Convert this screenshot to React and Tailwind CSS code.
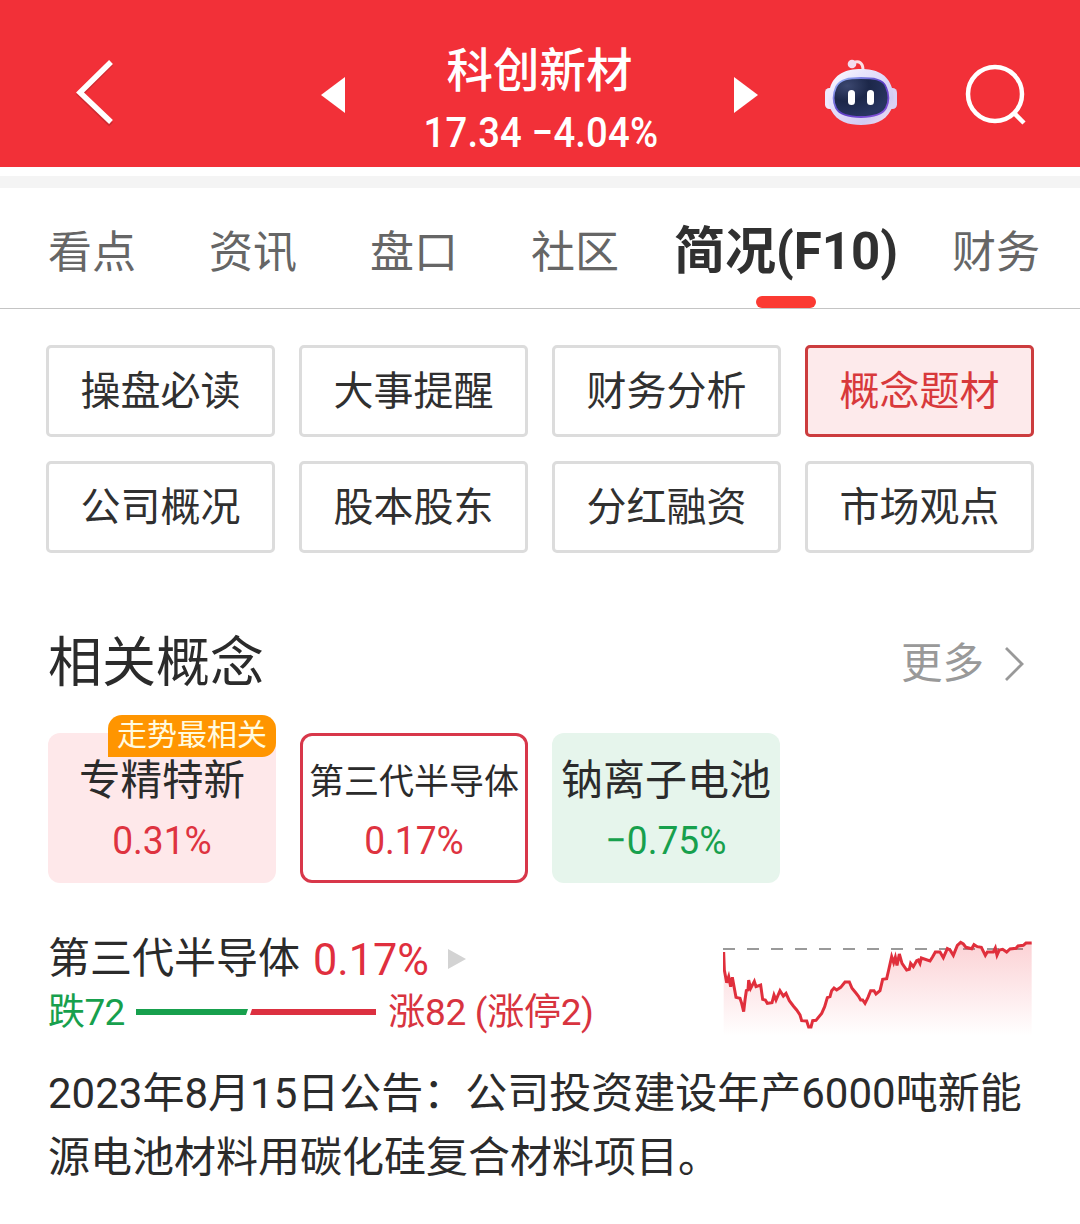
import React from "react";

const tabs = [
  { name: "看点", className: "ml-[48px]" },
  { name: "资讯", className: "ml-[73px]" },
  { name: "盘口", className: "ml-[73px]" },
  { name: "社区", className: "ml-[73px]" },
  { name: "简况(F10)", active: true, className: "ml-[55px]" },
  { name: "财务", className: "ml-[56px]" },
];

const menus = [
  "操盘必读",
  "大事提醒",
  "财务分析",
  "概念题材",
  "公司概况",
  "股本股东",
  "分红融资",
  "市场观点",
];

const trend =
  "71,96 73,150 80,188 86,170 92,200 97,172 103,205 108,232 120,235 125,250 131,275 135,240 139,212 144,210 146,180 152,205 163,184 168,200 182,195 188,238 196,240 202,250 216,248 222,225 228,240 240,212 250,228 258,220 268,242 280,258 290,270 300,285 305,302 320,303 326,321 333,321 338,302 348,301 365,280 374,260 382,233 390,230 395,212 402,204 410,210 422,202 435,186 448,186 456,205 466,217 475,228 482,240 488,240 495,250 504,232 512,212 522,212 528,222 540,212 548,178 560,176 566,150 575,110 581,128 586,112 591,136 598,102 606,130 620,150 628,148 632,130 640,140 650,122 655,120 660,130 664,114 690,123 698,110 706,96 720,96 730,113 742,86 750,90 760,106 772,76 782,67 790,72 798,82 815,86 822,74 832,80 844,82 856,106 862,96 880,96 886,84 891,106 898,90 908,88 920,96 930,87 948,85 954,78 970,76 978,69 995,69";

function Robot() {
  return (
    <svg className="ml-[67px] mt-[7px]" width="72" height="68" viewBox="0 0 72 68" fill="none">
      <defs>
        <linearGradient id="shell" x1="0" y1="0" x2="1" y2="1">
          <stop offset="0" stopColor="#ffffff" />
          <stop offset="0.3" stopColor="#e9e4fc" />
          <stop offset="0.75" stopColor="#d2cbf3" />
          <stop offset="1" stopColor="#fbe3ee" />
        </linearGradient>
        <linearGradient id="rim" x1="0" y1="0" x2="1" y2="1">
          <stop offset="0" stopColor="#9fc4ff" />
          <stop offset="0.5" stopColor="#5b3dc4" />
          <stop offset="1" stopColor="#8a55dc" />
        </linearGradient>
        <radialGradient id="face" cx="0.25" cy="0.2" r="0.8">
          <stop offset="0" stopColor="#3c4870" />
          <stop offset="0.5" stopColor="#1c2749" />
          <stop offset="1" stopColor="#283560" />
        </radialGradient>
      </defs>
      <path d="M28 6C34 3 38 6 38 13" stroke="#fbdfe6" strokeWidth="3" />
      <circle cx="27" cy="7" r="4.3" fill="#f3dcf0" />
      <rect x="0" y="31" width="11" height="21" rx="4.5" fill="#efe9fd" />
      <rect x="61" y="31" width="11" height="21" rx="4.5" fill="#dad0f5" />
      <path
        d="M36 12C51 12 63 17 67 31C69 38 70 46 66 53C60 65 48 68 36 68C24 68 12 65 6 53C2 46 3 38 5 31C9 17 21 12 36 12Z"
        fill="url(#shell)"
      />
      <path
        d="M36 21C48 21 58 22 61 30C64 37 64 45 61 51C57 58 47 60 36 60C25 60 15 58 11 51C8 45 8 37 11 30C15 22 24 21 36 21Z"
        fill="url(#face)"
        stroke="url(#rim)"
        strokeWidth="1.8"
      />
      <rect x="23" y="33" width="7" height="15" rx="3.5" fill="#fff" />
      <rect x="42" y="33" width="7" height="15" rx="3.5" fill="#fff" />
    </svg>
  );
}

function Header() {
  return (
    <header className="flex h-[167px] items-start bg-[#f23038] text-white">
      <svg className="ml-[74px] mt-[58px]" width="42" height="70" viewBox="0 0 42 70" fill="none">
        <path d="M37 4L6 35L37 65" stroke="#8d2026" strokeOpacity="0.35" strokeWidth="5.5" transform="translate(0 1.5)" />
        <path d="M37 4L6 34.5L37 64" stroke="#fff" strokeWidth="5.5" />
      </svg>
      <svg className="ml-[205px] mt-[77px]" width="24" height="36" viewBox="0 0 24 36">
        <path d="M0 18L24 0V36Z" fill="#fff" />
      </svg>
      <div className="mt-[43px] flex w-[389px] flex-col items-center font-medium">
        <h1 className="text-[46.5px] leading-[56px] font-medium">科创新材</h1>
        <div className="mt-[6px] ml-[3px] origin-center scale-x-[0.91] text-[42px] leading-[56px] tracking-[0.2px] whitespace-nowrap">
          17.34 −4.04%
        </div>
      </div>
      <svg className="mt-[77px]" width="24" height="36" viewBox="0 0 24 36">
        <path d="M24 18L0 0V36Z" fill="#fff" />
      </svg>
      <div className="mt-[50px]">
        <Robot />
      </div>
      <svg className="ml-[68px] mt-[63px]" width="62" height="62" viewBox="0 0 62 62" fill="none">
        <circle cx="30" cy="31" r="27" stroke="#fff" strokeWidth="4.5" />
        <path d="M49 50L59 60" stroke="#fff" strokeWidth="4.5" />
      </svg>
    </header>
  );
}

function Tabs() {
  return (
    <nav className="flex h-[121px] border-b border-[#c4c4c4] whitespace-nowrap">
      {tabs.map((tab) =>
        tab.active ? (
          <div key={tab.name} className={`relative w-[222px] ${tab.className}`}>
            <span className="block pt-[31px] text-[51px] leading-[66px] font-bold text-[#303030]">
              {tab.name}
            </span>
            <span className="absolute bottom-0 left-[82px] h-[12px] w-[60px] rounded-full bg-[#fb3a32]"></span>
          </div>
        ) : (
          <div key={tab.name} className={`pt-[32px] text-[44px] leading-[66px] text-[#666] ${tab.className}`}>
            {tab.name}
          </div>
        )
      )}
    </nav>
  );
}

function App() {
  return (
    <div className="h-[1224px] w-[1080px] overflow-hidden bg-white font-['Roboto','Noto_Sans_CJK_SC',sans-serif] text-[#2b2b2b]">
      <Header />
      <div className="mt-[9px] h-[12px] bg-[#f4f4f4]"></div>
      <Tabs />

      {/* F10 menu */}
      <div className="mt-9 ml-[46px] grid w-[988px] grid-cols-4 gap-6">
        {menus.map((menu) => (
          <button
            key={menu}
            className={
              menu === "概念题材"
                ? "h-[92px] rounded-[5px] border-3 border-[#cc3c3e] bg-[#fdeaeb] pt-px text-[40px] leading-none text-[#d8393b]"
                : "h-[92px] rounded-[5px] border-3 border-[#dcdcdc] pt-px text-[40px] leading-none text-[#303030]"
            }
          >
            {menu}
          </button>
        ))}
      </div>

      <div className="mt-[71px] flex h-[80px] items-center justify-between pr-[56px] pl-12">
        <h2 className="text-[54px] leading-[80px]">相关概念</h2>
        <div className="flex items-center text-[41.5px] text-[#999]">
          更多
          <svg className="mt-[-1px] ml-5" width="20" height="36" viewBox="0 0 20 36" fill="none">
            <path d="M2 2L18 18L2 34" stroke="#999" strokeWidth="2.8" />
          </svg>
        </div>
      </div>

      {/* related concepts */}
      <div className="mt-[29px] ml-12 flex gap-6 text-center whitespace-nowrap">
        <div className="relative h-[150px] w-[228px] rounded-xl bg-[#fee8ea]">
          <div className="absolute -top-[18px] right-0 h-[42px] w-[168px] rounded-[14px] rounded-bl-none bg-[#ff9500] text-[30px] leading-[40px] text-[#fffbe0]">
            走势最相关
          </div>
          <div className="pt-[18px] text-[41.5px] leading-[60px]">专精特新</div>
          <div className="scale-x-[0.94] text-[39.5px] leading-[60px] text-[#de3340]">0.31%</div>
        </div>
        <div className="h-[150px] w-[228px] rounded-xl border-3 border-[#d8374a]">
          <div className="-mx-2 pt-[18px] text-[35px] leading-[58px]">第三代半导体</div>
          <div className="-mt-px scale-x-[0.94] text-[39.5px] leading-[60px] text-[#de3340]">0.17%</div>
        </div>
        <div className="h-[150px] w-[228px] rounded-xl bg-[#e6f5ec]">
          <div className="pt-[18px] text-[42px] leading-[60px]">钠离子电池</div>
          <div className="scale-x-[0.94] text-[39.5px] leading-[60px] text-[#17a04d]">−0.75%</div>
        </div>
      </div>

      {/* selected concept */}
      <div className="mt-[44px] flex h-[116px] justify-between pr-[47px] pl-12 whitespace-nowrap">
        <div>
          <div className="flex h-[60px] items-center pt-[3px] text-[42px] leading-[60px]">
            第三代半导体
            <span className="ml-[13px] w-[117px] origin-left scale-x-[0.96] pt-[3px] text-[45px] text-[#e02f3e]">0.17%</span>
            <svg className="mt-px ml-[18px]" width="18" height="20" viewBox="0 0 18 20">
              <path d="M0 0L18 10L0 20Z" fill="#d3d3d3" />
            </svg>
          </div>
          <div className="flex h-[50px] items-center text-[37px] leading-[50px]">
            <span className="pt-px tracking-[-0.6px] text-[#17a04d]">跌72</span>
            <svg className="ml-[11.5px]" width="240" height="6" viewBox="0 0 240 6">
              <path d="M0 0H112L110 6H0Z" fill="#17a04d" />
              <path d="M116 0H240V6H114Z" fill="#dc3040" />
            </svg>
            <span className="ml-[12px] pt-px tracking-[-0.3px] text-[#d8343f]">涨82 (涨停2)</span>
          </div>
        </div>
        <svg className="mt-[8px]" width="310" height="102" viewBox="69 45 930 306" fill="none">
          <defs>
            <linearGradient id="area" x1="0" y1="0" x2="0" y2="1">
              <stop offset="0" stopColor="#f0303f" stopOpacity="0.22" />
              <stop offset="1" stopColor="#f0303f" stopOpacity="0" />
            </linearGradient>
          </defs>
          <path d="M69 87H995" stroke="#9a9a9a" strokeWidth="6" strokeDasharray="36 36" />
          <polygon points={`${trend} 995,348 71,348`} fill="url(#area)" />
          <polyline points={trend} stroke="#e02f3c" strokeWidth="9" strokeLinejoin="miter" />
        </svg>
      </div>

      <p className="mt-[19px] ml-12 w-[990px] text-[42px] leading-[64px]">
        2023年8月15日公告：公司投资建设年产6000吨新能源电池材料用碳化硅复合材料项目。
      </p>
    </div>
  );
}

export default App;
